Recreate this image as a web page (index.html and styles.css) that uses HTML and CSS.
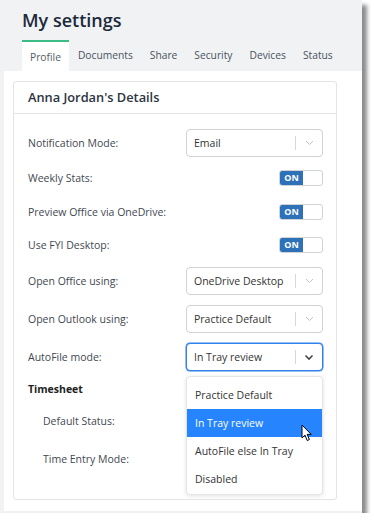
FILE: index.html
```html
<!DOCTYPE html>
<html lang="en">
<head>
    <meta charset="UTF-8">
    <meta name="viewport" content="width=device-width, initial-scale=1.0">
    <title>My settings</title>
    <link rel="stylesheet" href="styles.css">
</head>
<body>
    <div class="window">
        <h1 class="title">My settings</h1>
        <ul class="tabs">
            <li class="tab active">Profile</li>
            <li class="tab">Documents</li>
            <li class="tab">Share</li>
            <li class="tab">Security</li>
            <li class="tab">Devices</li>
            <li class="tab">Status</li>
        </ul>
        <div class="pane">
            <div class="card">
                <div class="card-head">Anna Jordan's Details</div>
                <div class="card-body">
                    <div class="row row-first">
                        <span class="label">Notification Mode:</span>
                        <div class="select">
                            <span class="value">Email</span>
                            <span class="arrow"><svg width="9" height="6" viewBox="0 0 9 6"><path d="M1 1 L4.5 4.5 L8 1" fill="none" stroke="#c4c4c4" stroke-width="1"/></svg></span>
                        </div>
                    </div>
                    <div class="row row-toggle">
                        <span class="label">Weekly Stats:</span>
                        <span class="toggle"><span class="on">ON</span></span>
                    </div>
                    <div class="row row-toggle row-short">
                        <span class="label">Preview Office via OneDrive:</span>
                        <span class="toggle"><span class="on">ON</span></span>
                    </div>
                    <div class="row row-toggle">
                        <span class="label">Use FYI Desktop:</span>
                        <span class="toggle"><span class="on">ON</span></span>
                    </div>
                    <div class="row">
                        <span class="label">Open Office using:</span>
                        <div class="select">
                            <span class="value">OneDrive Desktop</span>
                            <span class="arrow"><svg width="9" height="6" viewBox="0 0 9 6"><path d="M1 1 L4.5 4.5 L8 1" fill="none" stroke="#c4c4c4" stroke-width="1"/></svg></span>
                        </div>
                    </div>
                    <div class="row">
                        <span class="label">Open Outlook using:</span>
                        <div class="select">
                            <span class="value">Practice Default</span>
                            <span class="arrow"><svg width="9" height="6" viewBox="0 0 9 6"><path d="M1 1 L4.5 4.5 L8 1" fill="none" stroke="#c4c4c4" stroke-width="1"/></svg></span>
                        </div>
                    </div>
                    <div class="row">
                        <span class="label">AutoFile mode:</span>
                        <div class="select focused">
                            <span class="value">In Tray review</span>
                            <span class="arrow"><svg width="10" height="7" viewBox="0 0 10 7"><path d="M1.5 1.5 L5 5 L8.5 1.5" fill="none" stroke="#444" stroke-width="1.6"/></svg></span>
                            <ul class="menu">
                                <li class="option">Practice Default</li>
                                <li class="option selected">In Tray review
                                    <svg class="cursor" width="12" height="18" viewBox="0 0 12 18"><path d="M1 1 L1 14 L4 11.2 L6.2 16.5 L8.4 15.6 L6.2 10.4 L10.2 10.4 Z" fill="#fff" stroke="#000" stroke-width="1" stroke-linejoin="round"/></svg>
                                </li>
                                <li class="option">AutoFile else In Tray</li>
                                <li class="option">Disabled</li>
                            </ul>
                        </div>
                    </div>
                    <div class="row row-heading">
                        <span class="label heading">Timesheet</span>
                    </div>
                    <div class="row sub">
                        <span class="label">Default Status:</span>
                        <div class="select"></div>
                    </div>
                    <div class="row sub">
                        <span class="label">Time Entry Mode:</span>
                        <div class="select"></div>
                    </div>
                </div>
            </div>
        </div>
    </div>
</body>
</html>
```

FILE: styles.css
```css
body {
    margin: 0;
    background: #fff;
    font-family: "Open Sans", Arial, sans-serif;
}

.window {
    width: 362px;
    height: 513px;
    box-sizing: border-box;
    padding: 5px 0 2px 4px;
    background: #f1f2f4;
    box-shadow: 5px 5px 4px rgba(0, 0, 0, 0.45);
    display: flex;
    flex-direction: column;
}

.title {
    margin: 0 0 5px 18px;
    height: 30px;
    line-height: 30px;
    font-size: 18px;
    font-weight: 600;
    color: #1d2a3b;
}

.tabs {
    display: flex;
    margin: 0 0 0 18px;
    padding: 0;
    list-style: none;
    height: 31px;
}

.tab {
    padding: 0 8px;
    margin-right: 1px;
    line-height: 31px;
    font-size: 10.25px;
    color: #4a5360;
}

.tab.active {
    background: #fff;
    border-top: 2px solid #3dbb84;
    line-height: 30px;
    color: #555d66;
}

.pane {
    flex: 1;
    background: #fff;
    padding: 10px 25px 11px 9px;
}

.card {
    border: 1px solid #e2e4e7;
    border-radius: 3px;
    height: 100%;
    box-sizing: border-box;
}

.card-head {
    height: 31px;
    line-height: 31px;
    padding-left: 14px;
    border-bottom: 1px solid #e2e4e7;
    font-size: 12.8px;
    font-weight: 600;
    color: #2b3440;
}

.card-body {
    padding: 11px 13px 0 14px;
}

.row {
    display: flex;
    align-items: center;
    justify-content: space-between;
    height: 38px;
}

.row-first {
    height: 36px;
}

.row-toggle {
    height: 34px;
}

.row-short {
    height: 33px;
}

.row-heading {
    height: 26px;
}

.row.sub {
    padding-left: 15px;
}

.label {
    font-size: 10.5px;
    color: #3f4852;
}

.label.heading {
    font-weight: 700;
    color: #222;
}

.select {
    position: relative;
    width: 137px;
    height: 28px;
    box-sizing: border-box;
    border: 1px solid #cfd2d6;
    border-radius: 4px;
    display: flex;
    align-items: center;
    background: #fff;
}

.select.focused {
    border-color: #2f80ed;
    box-shadow: 0 0 0 0.5px #2f80ed;
}

.value {
    flex: 1;
    padding-left: 7px;
    font-size: 10.5px;
    color: #333;
}

.arrow {
    width: 26px;
    height: 14px;
    border-left: 1px solid #d6d8db;
    display: flex;
    align-items: center;
    justify-content: center;
}

.menu {
    position: absolute;
    top: 32px;
    left: -1px;
    width: 137px;
    box-sizing: border-box;
    margin: 0;
    padding: 4px 0 1px;
    list-style: none;
    background: #fff;
    border: 1px solid #e3e5e8;
    border-radius: 4px;
    box-shadow: 0 1px 4px rgba(0, 0, 0, 0.12);
    z-index: 2;
}

.option {
    position: relative;
    height: 28px;
    line-height: 28px;
    padding-left: 8px;
    font-size: 10.5px;
    color: #333;
}

.option.selected {
    background: #2684ff;
    color: #fff;
}

.cursor {
    position: absolute;
    left: 114px;
    top: 15px;
}

.toggle {
    display: flex;
    width: 44px;
    height: 16px;
    box-sizing: border-box;
    border: 1px solid #d0d3d6;
    border-radius: 3px;
    background: #fff;
    overflow: hidden;
}

.on {
    width: 23px;
    background: #2d72b8;
    color: #fff;
    font-size: 9px;
    font-weight: 700;
    line-height: 14px;
    text-align: center;
}
```
